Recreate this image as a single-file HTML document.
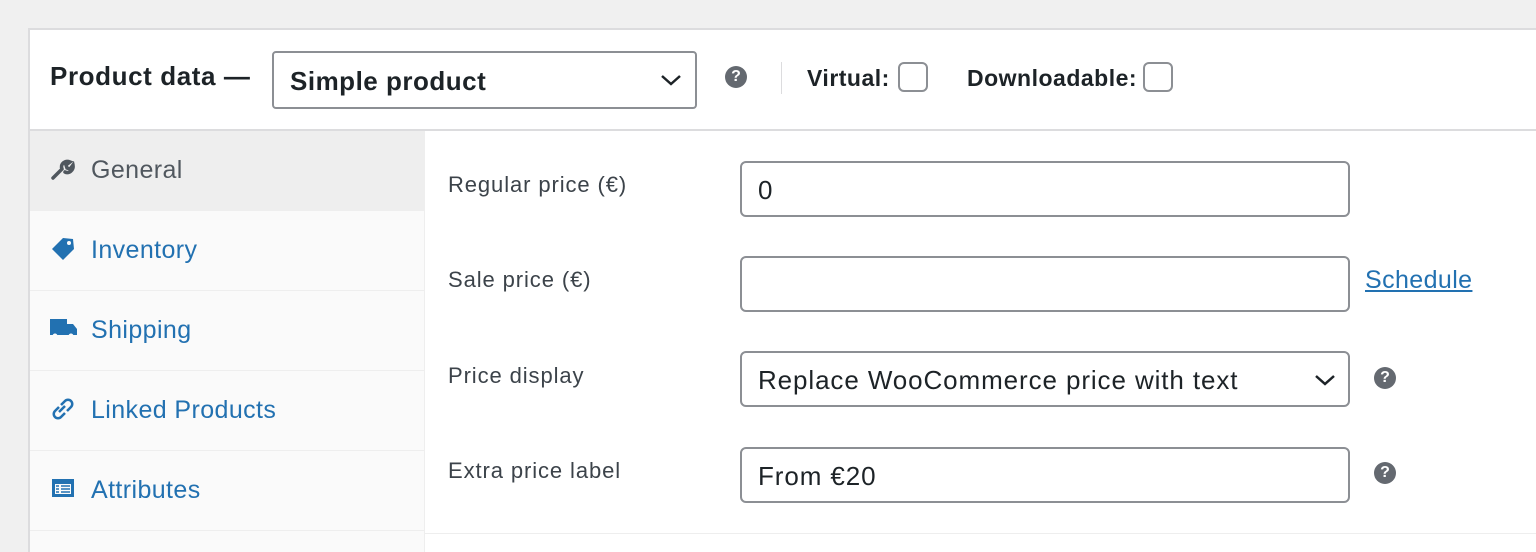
<!DOCTYPE html>
<html><head><style>
html,body{margin:0;width:1536px;height:552px;overflow:hidden}
body{background:#f0f0f0;font-family:"Liberation Sans",Arial,sans-serif;position:relative}
.panel{position:absolute;left:28px;top:28px;width:1508px;height:524px;background:#fff;border-left:2px solid #dcdcde;border-top:2px solid #dcdcde;box-sizing:border-box;overflow:hidden}
.hdr{position:absolute;left:0;top:0;right:0;height:99px;border-bottom:2px solid #dcdcde}
.abs{position:absolute}
.side{position:absolute;left:0;top:101px;width:394px;height:430px;background:#fafafa;border-right:1px solid #eee}
.tab{position:absolute;left:0;width:394px;height:79px;border-bottom:1px solid #eee;color:#2271b1;font-size:25px;letter-spacing:0.4px}
.tab span{position:absolute;left:61px;top:25px}
.tab svg{position:absolute;left:20px;top:26px}
.lbl{position:absolute;left:448px;font-size:22px;letter-spacing:0.9px;color:#3c434a}
.inp{position:absolute;left:740px;width:606px;height:52px;border:2px solid #8c8f94;border-radius:6px;background:#fff;font-size:26px;letter-spacing:0.9px;color:#1d2327;box-sizing:content-box}
.inp span{position:absolute;left:16px;top:12px}
.q{position:absolute;width:22px;height:22px;border-radius:50%;background:#646970;color:#fff;font-size:16px;font-weight:bold;text-align:center;line-height:22px}
.cb{position:absolute;width:26px;height:26px;border:2px solid #8c8f94;border-radius:6px;background:#fff}
.hb{position:absolute;font-weight:bold;color:#1d2327;font-size:23px;letter-spacing:0.5px}
</style></head><body>
<div class="panel">
 <div class="hdr">
  <div class="abs" style="left:20px;top:31px;font-size:26px;letter-spacing:0.6px;font-weight:bold;color:#1d2327">Product data —</div>
  <div class="abs" style="left:242px;top:21px;width:421px;height:54px;border:2px solid #8c8f94;border-radius:4px">
   <span class="abs" style="left:16px;top:13px;font-size:26px;letter-spacing:0.5px;font-weight:bold;color:#1d2327">Simple product</span>
   <svg class="abs" style="left:386px;top:20px" width="22" height="14"><path d="M2 3l9 8 9-8" fill="none" stroke="#1d2327" stroke-width="2.5"/></svg>
  </div>
  <div class="q" style="left:695px;top:36px">?</div>
  <div class="abs" style="left:751px;top:32px;width:1px;height:32px;background:#dcdcde"></div>
  <div class="hb" style="left:777px;top:35px">Virtual:</div>
  <div class="cb" style="left:868px;top:32px"></div>
  <div class="hb" style="left:937px;top:35px">Downloadable:</div>
  <div class="cb" style="left:1113px;top:32px"></div>
 </div>
 <div class="side">
  <div class="tab" style="top:0;background:#eee;color:#50575e"><svg width="26" height="24" viewBox="0 0 26 24"><path d="M3 21l9-9M12 12c-2-5 3-9 8-7l-4 3 1 3 3 1 3-4c1 5-4 9-8 7" fill="none" stroke="#50575e" stroke-width="3.5" stroke-linecap="round"/></svg><span>General</span></div>
  <div class="tab" style="top:80px"><svg width="26" height="24" viewBox="0 0 26 24"><path d="M2 12l11-11 10 1 1 10-11 11z" fill="#2271b1"/><circle cx="19" cy="6" r="2" fill="#fafafa"/></svg><span>Inventory</span></div>
  <div class="tab" style="top:160px"><svg width="28" height="24" viewBox="0 0 28 24"><path d="M0 2h17v16H0zM17 7h6l4 5v6H17z" fill="#2271b1"/><circle cx="5" cy="19" r="2.5" fill="#fafafa"/><circle cx="21" cy="19" r="2.5" fill="#fafafa"/></svg><span>Shipping</span></div>
  <div class="tab" style="top:240px"><svg width="26" height="24" viewBox="0 0 26 24"><path d="M11 8l4-4a4 4 0 016 6l-4 4M15 16l-4 4a4 4 0 01-6-6l4-4M9 15l6-6" fill="none" stroke="#2271b1" stroke-width="2.5"/></svg><span>Linked Products</span></div>
  <div class="tab" style="top:320px"><svg width="26" height="24" viewBox="0 0 26 24"><rect x="2" y="2" width="22" height="18" fill="#2271b1"/><rect x="5" y="7" width="16" height="10" fill="#fafafa"/><path d="M6 9h3M11 9h9M6 12h3M11 12h9M6 15h3M11 15h9" stroke="#2271b1" stroke-width="1.5"/></svg><span>Attributes</span></div>
 </div>
</div>
<div class="abs" style="left:424px;top:533px;width:1112px;height:1px;background:#eee"></div>
<div class="lbl" style="top:172px">Regular price (€)</div>
<div class="inp" style="top:161px"><span>0</span></div>
<div class="lbl" style="top:267px">Sale price (€)</div>
<div class="inp" style="top:256px"></div>
<div class="abs" style="left:1365px;top:266px;font-size:25px;letter-spacing:0.4px;color:#2271b1;text-decoration:underline">Schedule</div>
<div class="lbl" style="top:363px">Price display</div>
<div class="inp" style="top:351px"><span>Replace WooCommerce price with text</span><svg class="abs" style="left:572px;top:20px" width="22" height="14"><path d="M2 3l9 8 9-8" fill="none" stroke="#1d2327" stroke-width="2.5"/></svg></div>
<div class="q" style="left:1374px;top:367px">?</div>
<div class="lbl" style="top:458px">Extra price label</div>
<div class="inp" style="top:447px"><span>From €20</span></div>
<div class="q" style="left:1374px;top:462px">?</div>
</body></html>
